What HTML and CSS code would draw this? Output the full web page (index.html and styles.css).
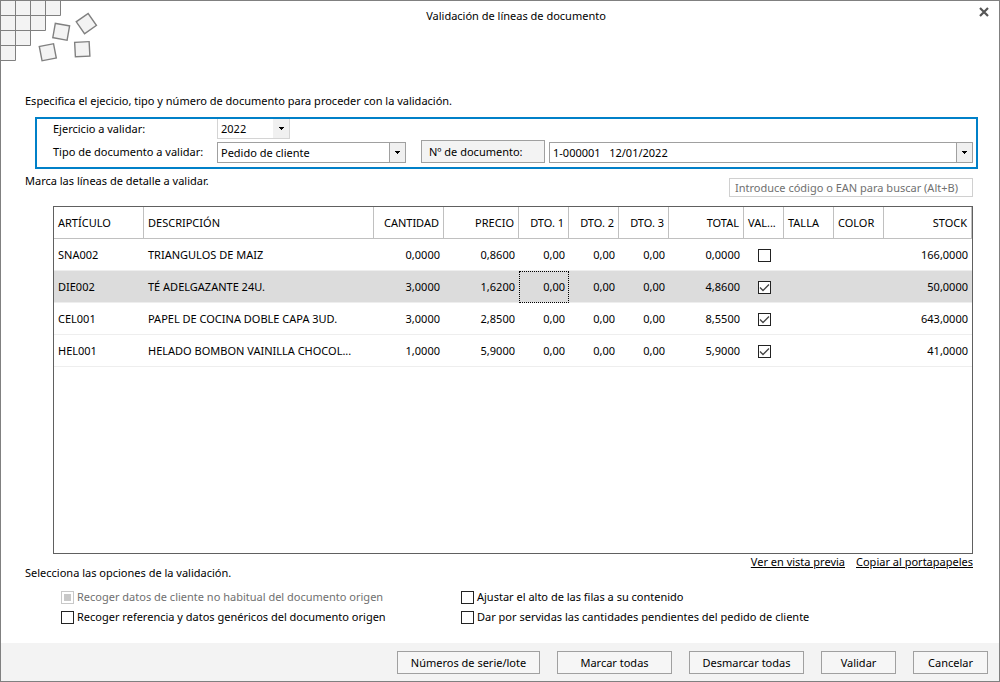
FILE: index.html
```html
<!DOCTYPE html>
<html lang="es">
<head>
<meta charset="utf-8">
<meta name="viewport" content="width=device-width, initial-scale=1">
<title>Validación de líneas de documento</title>
<link rel="stylesheet" href="styles.css">
</head>
<body>
<main class="dialog">
  <header class="titlebar">
    <svg class="emblem" width="98" height="65" viewBox="0 0 98 65" aria-hidden="true">
      <g fill="#f3f3f3" stroke="#808080" stroke-width="1">
        <path d="M-.5-.5h60v15h-60zM-.5 14.500h45v15h-45zM-.5 29.500h30v15h-30zM-.5 44.500h15v15h-15z"/>
        <path fill="none" d="M14.500 0v45M29.500 0v30M44.500 0v15"/>
        <g stroke-width="1.400">
          <rect x="53" y="23.500" width="14.500" height="14.500" transform="rotate(10 60 30.500)" />
          <rect x="78" y="15.500" width="14.500" height="14.500" transform="rotate(-35 85 22.500)" />
          <rect x="39.500" y="44" width="14.500" height="14.500" transform="rotate(-11 46.500 51)" />
          <rect x="74" y="41" width="14.500" height="14.500" transform="rotate(-3 81 48)" />
        </g>
      </g>
    </svg>
    <h1 class="title">Validación de líneas de documento</h1>
    <button class="close" type="button" aria-label="Cerrar">
      <svg width="10" height="10" viewBox="0 0 10 10" aria-hidden="true"><path d="M1 1l8 8M9 1l-8 8" stroke="#555" stroke-width="2.200"/></svg>
    </button>
  </header>

  <p class="lead">Especifica el ejecicio, tipo y número de documento para proceder con la validación.</p>

  <section class="criteria">
    <label for="year">Ejercicio a validar:</label>
    <select id="year" class="combo combo-light"><option>2022</option></select>
    <label for="kind">Tipo de documento a validar:</label>
    <div class="criteria-row">
      <select id="kind" class="combo combo-kind"><option>Pedido de cliente</option></select>
      <button class="number-button" type="button">Nº de documento:</button>
      <select id="number" class="combo combo-number" aria-label="Nº de documento"><option>1-000001 &nbsp; 12/01/2022</option></select>
    </div>
  </section>

  <div class="lines-bar">
    <p>Marca las líneas de detalle a validar.</p>
    <input class="search" type="text" aria-label="Buscar" placeholder="Introduce código o EAN para buscar (Alt+B)">
  </div>

  <div class="grid">
    <table class="lines">
      <colgroup>
        <col class="w90"><col><col class="w70"><col class="w75"><col class="w50"><col class="w50"><col class="w50"><col class="w75"><col class="w40"><col class="w50"><col class="w50"><col class="w88">
      </colgroup>
      <thead>
        <tr><th>ARTÍCULO</th><th>DESCRIPCIÓN</th><th class="num">CANTIDAD</th><th class="num">PRECIO</th><th class="num">DTO. 1</th><th class="num">DTO. 2</th><th class="num">DTO. 3</th><th class="num">TOTAL</th><th>VAL...</th><th>TALLA</th><th>COLOR</th><th class="num">STOCK</th></tr>
      </thead>
      <tbody>
        <tr><td>SNA002</td><td>TRIANGULOS DE MAIZ</td><td class="num">0,0000</td><td class="num">0,8600</td><td class="num">0,00</td><td class="num">0,00</td><td class="num">0,00</td><td class="num">0,0000</td><td class="mid"><input class="check" type="checkbox" aria-label="Validar SNA002"></td><td></td><td></td><td class="num">166,0000</td></tr>
        <tr class="selected"><td>DIE002</td><td>TÉ ADELGAZANTE 24U.</td><td class="num">3,0000</td><td class="num">1,6200</td><td class="num focus">0,00</td><td class="num">0,00</td><td class="num">0,00</td><td class="num">4,8600</td><td class="mid"><input class="check" type="checkbox" checked aria-label="Validar DIE002"></td><td></td><td></td><td class="num">50,0000</td></tr>
        <tr><td>CEL001</td><td>PAPEL DE COCINA DOBLE CAPA 3UD.</td><td class="num">3,0000</td><td class="num">2,8500</td><td class="num">0,00</td><td class="num">0,00</td><td class="num">0,00</td><td class="num">8,5500</td><td class="mid"><input class="check" type="checkbox" checked aria-label="Validar CEL001"></td><td></td><td></td><td class="num">643,0000</td></tr>
        <tr><td>HEL001</td><td>HELADO BOMBON VAINILLA CHOCOL...</td><td class="num">1,0000</td><td class="num">5,9000</td><td class="num">0,00</td><td class="num">0,00</td><td class="num">0,00</td><td class="num">5,9000</td><td class="mid"><input class="check" type="checkbox" checked aria-label="Validar HEL001"></td><td></td><td></td><td class="num">41,0000</td></tr>
      </tbody>
    </table>
  </div>

  <nav class="links">
    <a href="#preview">Ver en vista previa</a>
    <a href="#copy">Copiar al portapapeles</a>
  </nav>

  <p class="options-title">Selecciona las opciones de la validación.</p>
  <section class="options">
    <label class="option disabled"><input class="check" type="checkbox" disabled>Recoger datos de cliente no habitual del documento origen</label>
    <label class="option"><input class="check" type="checkbox">Ajustar el alto de las filas a su contenido</label>
    <label class="option"><input class="check" type="checkbox">Recoger referencia y datos genéricos del documento origen</label>
    <label class="option"><input class="check" type="checkbox">Dar por servidas las cantidades pendientes del pedido de cliente</label>
  </section>

  <footer class="actions">
    <button class="action wide" type="button">Números de serie/lote</button>
    <button class="action medium" type="button">Marcar todas</button>
    <button class="action medium" type="button">Desmarcar todas</button>
    <button class="action" type="button">Validar</button>
    <button class="action" type="button">Cancelar</button>
  </footer>
</main>
</body>
</html>
```

FILE: styles.css
```css
* { box-sizing: border-box; }

body {
  margin: 0;
  background: #fff;
  color: #000;
  font: 11px/16px "Noto Sans", "Open Sans", sans-serif;
}

button, input, select { font: inherit; color: inherit; border-radius: 0; }
p, h1 { margin: 0; }

.dialog {
  display: flex;
  flex-direction: column;
  min-height: 100vh;
  border: 1px solid #808080;
}

.titlebar {
  display: grid;
  grid-template-columns: 98px 1fr 66px;
  align-items: start;
}
.emblem { display: block; }
.title {
  padding-top: 7px;
  text-align: center;
  font-size: 11px;
  font-weight: normal;
}
.close {
  justify-self: end;
  display: flex;
  margin: 6px 10px 0 0;
  padding: 0;
  border: 0;
  background: none;
}

.lead { margin: 27px 24px 8px; }

.criteria {
  display: grid;
  grid-template-columns: 164px 1fr;
  align-items: center;
  row-gap: 1px;
  margin: 0 21px 0 34px;
  padding: 0 3px 4px 16px;
  border: 2px solid #0080c8;
}
.criteria-row { display: flex; align-items: flex-end; }

.combo {
  appearance: none;
  height: 21px;
  padding: 0 20px 0 3px;
  border: 1px solid #a0a0a0;
  background-color: #fff;
  background-image:
    url("data:image/svg+xml,%3Csvg xmlns='http://www.w3.org/2000/svg' width='5' height='3'%3E%3Cpath d='M0 0h5v1h-1v1h-1v1h-1v-1h-1v-1h-1z'/%3E%3C/svg%3E"),
    linear-gradient(#a0a0a0, #a0a0a0),
    linear-gradient(#f0f0f0, #f0f0f0);
  background-position: right 5px center, right 15px top, right top;
  background-size: 5px 3px, 1px 100%, 15px 100%;
  background-repeat: no-repeat;
}
.combo-light {
  width: 73px;
  height: 20px;
  border-color: #d4d4d4;
  border-top: 0;
  background-size: 5px 3px, 0 0, 16px 100%;
}
.combo-kind { width: 189px; margin-right: 15px; }
.combo-number { flex: 1; min-width: 0; }

.number-button {
  width: 124px;
  height: 23px;
  margin-right: 4px;
  padding: 0 7px;
  border: 1px solid #a0a0a0;
  background: #f3f3f3;
  text-align: left;
}

.lines-bar {
  display: flex;
  justify-content: space-between;
  margin: 4px 26px 9px 24px;
}
.search {
  width: 244px;
  height: 19px;
  margin-top: 5px;
  padding: 0 5px;
  border: 1px solid #d0d0d0;
}
.search::placeholder { color: #707070; opacity: 1; }

.grid {
  flex: 1;
  margin: 0 26px 0 52px;
  border: 1px solid #606060;
}
.lines {
  width: 100%;
  table-layout: fixed;
  border-collapse: separate;
  border-spacing: 0;
}
.lines th, .lines td {
  height: 32px;
  padding: 0 4px;
  text-align: left;
  white-space: nowrap;
  overflow: hidden;
  border-bottom: 1px solid #eee;
}
.lines th {
  font-weight: normal;
  border-right: 1px solid #c0c0c0;
  border-bottom-color: #c0c0c0;
}
.lines .num { text-align: right; }
.lines .mid { text-align: center; }
.lines .selected td { background: #dcdcdc; }
.lines .focus { outline: 1px dotted #000; outline-offset: -1px; }
.w40 { width: 40px; }
.w50 { width: 50px; }
.w70 { width: 70px; }
.w75 { width: 75px; }
.w88 { width: 88px; }
.w90 { width: 90px; }

.check {
  appearance: none;
  flex: none;
  width: 13px;
  height: 13px;
  margin: 0;
  border: 1px solid #222;
  background: #fff center / 11px 11px no-repeat;
  vertical-align: middle;
}
.check:checked {
  background-image: url("data:image/svg+xml,%3Csvg xmlns='http://www.w3.org/2000/svg' width='11' height='11'%3E%3Cpath d='M1 5.500l3 3L10 2.500' fill='none' stroke='%23444' stroke-width='1.300'/%3E%3C/svg%3E");
}
.check:disabled {
  padding: 2px;
  border-color: #c8c8c8;
  background: #c8c8c8 content-box;
}

.links {
  display: flex;
  justify-content: flex-end;
  gap: 11px;
  margin: 0 26px;
}
.links a { color: #000; }

.options-title { margin: -5px 24px 0; }
.options {
  display: grid;
  grid-template-columns: 400px 1fr;
  row-gap: 4px;
  margin: 8px 26px 18px 60px;
}
.option { display: flex; align-items: center; gap: 3px; }
.disabled { color: #707070; }

.actions {
  display: flex;
  justify-content: flex-end;
  gap: 17px;
  padding: 8px 11px 7px;
  background: #f3f3f3;
}
.action {
  width: 75px;
  height: 23px;
  padding: 0;
  border: 1px solid #a0a0a0;
  background: #f6f6f6;
}
.medium { width: 115px; }
.wide { width: 143px; }
```
